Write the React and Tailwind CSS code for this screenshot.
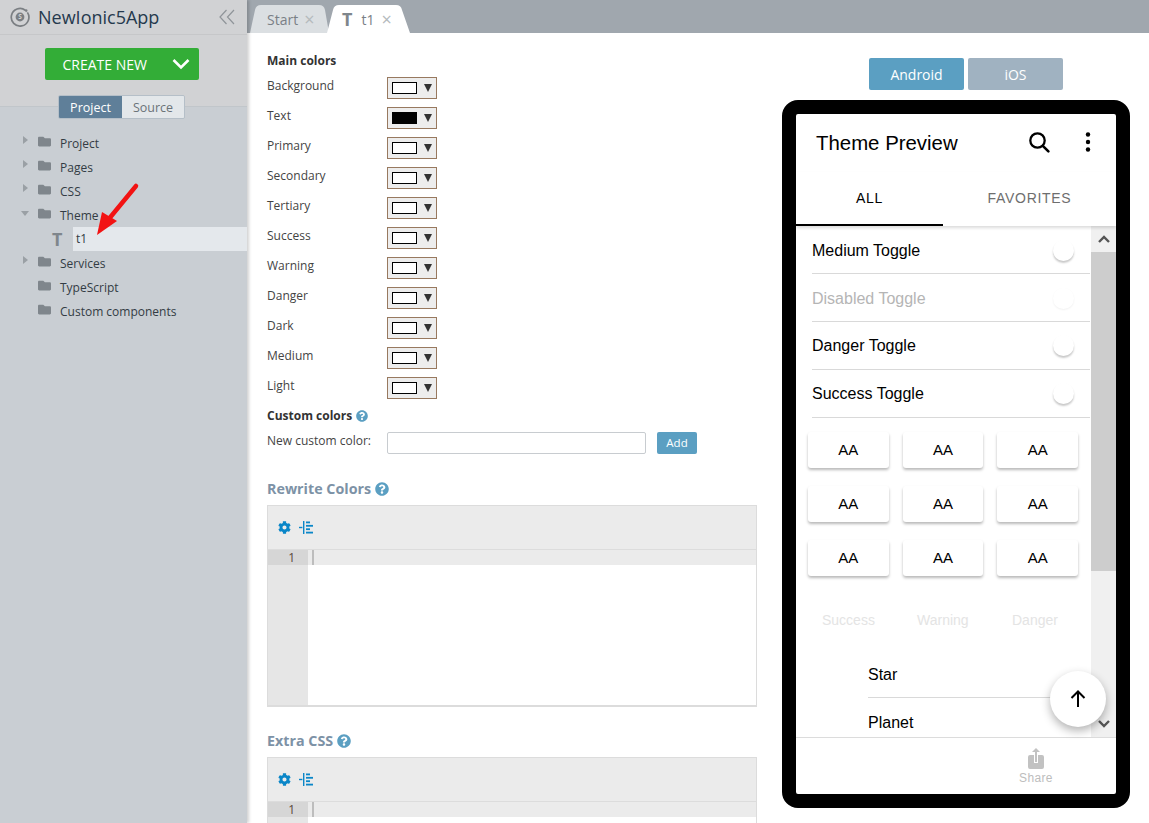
import React from "react";
import { FaFolder, FaCog, FaQuestionCircle } from "react-icons/fa";

const open = "font-['Open_Sans',sans-serif]";
const arial = "font-['Liberation_Sans',Arial,sans-serif]";

const tree = [
  { n: "Project", c: 1 },
  { n: "Pages", c: 1 },
  { n: "CSS", c: 1 },
  { n: "Theme", o: 1 },
  { n: "t1", leaf: 1 },
  { n: "Services", c: 1 },
  { n: "TypeScript" },
  { n: "Custom components" },
];
const colors = ["Background", "Text", "Primary", "Secondary", "Tertiary", "Success", "Warning", "Danger", "Dark", "Medium", "Light"];
const toggles = ["Medium Toggle", "Disabled Toggle", "Danger Toggle", "Success Toggle"];

function Indent() {
  return (
    <svg width="14" height="13" viewBox="0 0 14 13" fill="#0a86c8">
      <rect x="4" y="0" width="1.4" height="13" />
      <rect x="0" y="5.8" width="3.4" height="1.4" />
      <rect x="7" y="0.5" width="4" height="1.8" />
      <rect x="7" y="3.9" width="7" height="1.8" />
      <rect x="7" y="7.3" width="4" height="1.8" />
      <rect x="7" y="10.7" width="7" height="1.8" />
    </svg>
  );
}

function Editor({ h }) {
  return (
    <div className={`border border-[#dcdcdc] border-b-2 ${h} flex flex-col w-[490px]`}>
      <div className="h-[44px] shrink-0 bg-[#ebebeb] border-b border-[#dcdcdc] flex items-center gap-[8px] pl-[10px]">
        <FaCog className="text-[#0a86c8] text-[13px]" />
        <Indent />
      </div>
      <div className="flex flex-1">
        <div className="w-[40px] bg-[#e6e6e6]">
          <div className={`h-[15px] bg-[#d6d6d6] text-[12px] leading-[15px] text-right pr-[13px] text-[#5a4a3a] ${open}`}>1</div>
        </div>
        <div className="flex-1">
          <div className="h-[15px] bg-[#ebebeb] pl-[4px]">
            <div className="w-[2px] h-[15px] bg-[#bdbdbd]" />
          </div>
        </div>
      </div>
    </div>
  );
}

export default function App() {
  return (
    <div className={`w-[1149px] h-[823px] overflow-hidden flex bg-white ${open}`}>
      {/* sidebar */}
      <aside className="w-[247px] shrink-0 h-full bg-[#c9ced3] shadow-[2px_0_3px_rgba(0,0,0,0.18)] z-10 flex flex-col">
        <div className="h-[107px] shrink-0 bg-[#d1d2d4] border-b border-[#c1c6ca] relative">
          <div className="h-[35px] border-b border-[#c6c7c9] flex items-center pl-[10px]">
            <svg width="20" height="20" viewBox="0 0 20 20" className="shrink-0">
              <path d="M15.3 3.2A8.8 8.8 0 1 0 17.4 5.4" fill="none" stroke="#7b7f83" strokeWidth="1.7" />
              <circle cx="16.2" cy="3.6" r="1.3" fill="#7b7f83" />
              <circle cx="10" cy="10" r="4.4" fill="#7b7f83" />
              <text x="10" y="12.4" textAnchor="middle" fontSize="6.5" fontWeight="700" fill="#d1d2d4">S</text>
            </svg>
            <span className="ml-[8px] text-[18px] leading-none text-[#25394d]">NewIonic5App</span>
            <svg width="16" height="16" viewBox="0 0 16 16" className="ml-auto mr-[12px]" fill="none" stroke="#8f9499" strokeWidth="1.2">
              <path d="M7.5 1 1 8l6.5 7M15 1 8.5 8l6.5 7" />
            </svg>
          </div>
          <div className="flex justify-center pr-[4px] mt-[13px]">
            <div className="w-[154px] h-[32px] bg-[#33ad37] rounded-[2px] flex items-center text-white text-[14px] pl-[18px]">
              CREATE NEW
              <svg width="18" height="12" viewBox="0 0 18 12" className="ml-auto mr-[9px]" fill="none" stroke="#fff" strokeWidth="2.6">
                <path d="M1.5 2 9 9.5 16.5 2" />
              </svg>
            </div>
          </div>
          <div className="absolute left-[58px] top-[95px] w-[127px] h-[24px] flex text-[12.5px] rounded-[2px] overflow-hidden border border-[#b5bfc8]">
            <div className="w-[63px] bg-[#5f7f99] text-white flex items-center justify-center pt-[2px]">Project</div>
            <div className="flex-1 bg-[#e3e7ea] text-[#6b7379] flex items-center justify-center pt-[2px]">Source</div>
          </div>
        </div>
        <div className="pt-[24px]">
          {tree.map((t) =>
            t.leaf ? (
              <div key={t.n} className="h-[24px] flex items-center relative">
                <span className="absolute left-[52px] text-[18px] font-bold text-[#7f868c] leading-none">T</span>
                <div className="ml-[73px] flex-1 h-full bg-[#e4e8ec] pl-[3px] flex items-center text-[12px] text-[#333c44]">t1</div>
              </div>
            ) : (
              <div key={t.n} className="h-[24px] flex items-center relative text-[12px] text-[#333c44]">
                {t.c && <span className="absolute left-[23px] top-[5px] w-0 h-0 border-y-[4px] border-y-transparent border-l-[5px] border-l-[#9aa0a5]" />}
                {t.o && <span className="absolute left-[21px] top-[8px] w-0 h-0 border-x-[4px] border-x-transparent border-t-[5px] border-t-[#9aa0a5]" />}
                <FaFolder className="absolute left-[38px] top-[4px] text-[#7f868c] text-[13px]" />
                <span className="ml-[60px] mt-[1px]">{t.n}</span>
              </div>
            )
          )}
        </div>
      </aside>

      {/* main */}
      <div className="flex-1 flex flex-col min-w-0">
        <div className="h-[33px] shrink-0 bg-[#a0a7ae] flex items-end pl-[3px]">
          <div className="relative w-[79px] h-[28px] flex items-center pl-[17px] text-[14px] text-[#7a8086]">
            <svg width="79" height="28" className="absolute inset-0" viewBox="0 0 79 28">
              <path d="M0 28 5 5Q6 0 11 0H69Q74 0 75 5L79 28Z" fill="#dbdfe2" />
            </svg>
            <span className="relative">Start</span>
            <span className="relative ml-[6px] text-[18px] leading-none text-[#b5babd]">×</span>
          </div>
          <div className="relative w-[83px] h-[28px] -ml-[2px] flex items-center pl-[15px] text-[14px] text-[#7a8086]">
            <svg width="83" height="28" className="absolute inset-0" viewBox="0 0 83 28">
              <path d="M0 28 6 5Q7 0 12 0H69Q74 0 75 5L83 28Z" fill="#fff" />
            </svg>
            <span className="relative text-[18px] font-bold leading-none mr-[9px] text-[#7f868c]">T</span>
            <span className="relative">t1</span>
            <span className="relative ml-[7px] text-[18px] leading-none text-[#b5babd]">×</span>
          </div>
        </div>

        <div className="flex-1 flex min-h-0">
          {/* settings column */}
          <div className="w-[535px] shrink-0 pl-[20px] pt-[19px]">
            <div className="text-[12px] font-bold leading-[17px] text-[#333]">Main colors</div>
            <div className="mt-[3px]">
              {colors.map((c) => (
                <div key={c} className="h-[30px] flex">
                  <span className="w-[120px] text-[12px] leading-[18px] pt-[5px] text-[#444]">{c}</span>
                  <div className="w-[50px] h-[22px] mt-[5px] border border-[#98795f] bg-[#ededed] flex items-center pl-[4px]">
                    <span className={`w-[25px] h-[12px] border border-black ${c === "Text" ? "bg-black" : "bg-white"}`} />
                    <span className="ml-[7px] w-0 h-0 border-x-[4px] border-x-transparent border-t-[8px] border-t-[#333]" />
                  </div>
                </div>
              ))}
            </div>
            <div className="flex items-center gap-[4px] text-[12px] font-bold text-[#333] leading-[17px] mt-[5px]">
              Custom colors <FaQuestionCircle className="text-[#5b9fc2] text-[12px]" />
            </div>
            <div className="flex mt-[8px] h-[22px]">
              <span className="w-[120px] text-[12px] leading-[18px] text-[#444]">New custom color:</span>
              <div className="w-[259px] h-[22px] border border-[#c8ccd0] rounded-[2px] bg-white" />
              <div className="ml-[11px] w-[40px] h-[22px] rounded-[2px] bg-[#5b9fc2] text-white text-[11.5px] flex items-center justify-center">Add</div>
            </div>
            <div className="flex items-center gap-[4px] mt-[25px] text-[14.3px] font-bold text-[#7d92a6] leading-[20px]">
              Rewrite Colors <FaQuestionCircle className="text-[#5b9fc2] text-[14px]" />
            </div>
            <div className="mt-[6px]"><Editor h="h-[202px]" /></div>
            <div className="flex items-center gap-[4px] mt-[24px] text-[14.3px] font-bold text-[#7d92a6] leading-[20px]">
              Extra CSS <FaQuestionCircle className="text-[#5b9fc2] text-[14px]" />
            </div>
            <div className="mt-[6px]"><Editor h="h-[202px]" /></div>
          </div>

          {/* preview column */}
          <div className="flex-1 pt-[25px]">
            <div className="flex gap-[4px] pl-[87px]">
              <div className="w-[95px] h-[32px] rounded-[2px] bg-[#5b9fc2] text-white text-[14px] flex items-center justify-center">Android</div>
              <div className="w-[95px] h-[32px] rounded-[2px] bg-[#a0b2c1] text-white text-[14px] flex items-center justify-center">iOS</div>
            </div>
            <div className={`mt-[10px] ml-[0px] w-[348px] h-[708px] border-[14px] border-black rounded-[16px] bg-white flex flex-col relative overflow-hidden ${arial}`}>
              <div className="h-[58px] shrink-0 flex items-center pl-[20px] text-[20.4px] text-black">
                Theme Preview
                <svg width="24" height="24" viewBox="0 0 24 24" className="ml-auto mr-[34px] -mt-[3px]" fill="none" stroke="#000" strokeWidth="2.3">
                  <circle cx="10.5" cy="10.5" r="7.2" />
                  <path d="m15.8 15.8 5.6 5.6" strokeLinecap="round" strokeWidth="2.6" />
                </svg>
                <svg width="6" height="22" viewBox="0 0 6 22" className="mr-[25px] -mt-[3px]" fill="#000">
                  <circle cx="3" cy="3.5" r="2.2" /><circle cx="3" cy="11" r="2.2" /><circle cx="3" cy="18.5" r="2.2" />
                </svg>
              </div>
              <div className="h-[54px] shrink-0 flex text-[14px] tracking-[0.05em] shadow-[0_2px_3px_rgba(0,0,0,0.14)] z-10 bg-white">
                <div className="w-[147px] border-b-2 border-black flex items-center justify-center text-black">ALL</div>
                <div className="flex-1 flex items-center justify-center text-[#6e6e6e] pb-[1px]">FAVORITES</div>
              </div>
              <div className="flex-1 flex min-h-0 border-b border-[#dcdcdc]">
                <div className="flex-1 min-w-0 overflow-hidden">
                  <div className="pl-[16px] pr-[1px]">
                    {toggles.map((t, i) => (
                      <div key={t} className={`h-[48px] border-b border-[#d9d9d9] flex items-center justify-between pr-[16px] text-[16px] ${i === 1 ? "text-[#b5b5b5]" : "text-black"} ${i < 2 ? "pt-[2px]" : ""}`}>
                        {t}
                        <span className={`w-[21px] h-[21px] rounded-full bg-white ${i === 1 ? "shadow-[0_1px_2px_rgba(0,0,0,0.06)]" : "shadow-[0_2px_2px_rgba(0,0,0,0.22)]"}`} />
                      </div>
                    ))}
                  </div>
                  <div className="grid grid-cols-3 gap-x-[14px] gap-y-[18px] pl-[12px] pr-[13px] mt-[14px]">
                    {Array.from({ length: 9 }).map((_, i) => (
                      <div key={i} className="h-[36px] rounded-[3px] bg-white shadow-[0_2px_3px_rgba(0,0,0,0.28)] flex items-center justify-center text-[15px] text-black">AA</div>
                    ))}
                  </div>
                  <div className="flex mt-[34px] pl-[26px] text-[14px] text-[#e4e4e4]">
                    <span className="w-[95px]">Success</span>
                    <span className="w-[95px]">Warning</span>
                    <span>Danger</span>
                  </div>
                  <div className="pl-[72px] mt-[20px] text-[16px] text-black">
                    <div className="h-[47px] border-b border-[#d9d9d9] flex items-center pt-[2px]">Star</div>
                    <div className="h-[48px] flex items-center pt-[2px]">Planet</div>
                  </div>
                </div>
                <div className="w-[25px] shrink-0 bg-[#f0f0f0] flex flex-col relative">
                  <div className="h-[26px] flex items-center justify-center">
                    <svg width="12" height="8" viewBox="0 0 12 8" fill="none" stroke="#555" strokeWidth="2.4"><path d="M1 7l5-5 5 5" /></svg>
                  </div>
                  <div className="h-[319px] bg-[#cdcdcd]" />
                  <div className="mt-auto h-[26px] flex items-center justify-center">
                    <svg width="12" height="8" viewBox="0 0 12 8" fill="none" stroke="#555" strokeWidth="2.4"><path d="M1 1l5 5 5-5" /></svg>
                  </div>
                </div>
              </div>
              <div className="h-[56px] shrink-0 flex flex-col items-center pl-[160px] pt-[10px] text-[12px] tracking-[0.03em] text-[#bdbdbd] leading-[14px]">
                <svg width="18" height="22" viewBox="0 0 18 22" fill="#c2c2c2">
                  <path d="M9 0 5 4h3v10h2V4h3z" />
                  <path d="M3 7h4v8h4V7h4a2 2 0 0 1 2 2v10a2 2 0 0 1-2 2H3a2 2 0 0 1-2-2V9a2 2 0 0 1 2-2z" />
                </svg>
                <span className="mt-[1px]">Share</span>
              </div>
              <div className="absolute left-[254px] top-[557px] w-[56px] h-[56px] rounded-full bg-white shadow-[0_4px_10px_rgba(0,0,0,0.3)] flex items-center justify-center z-20">
                <svg width="24" height="24" viewBox="0 0 24 24" fill="none" stroke="#000" strokeWidth="2"><path d="M12 20V4.5M5.5 11 12 4.5 18.5 11" /></svg>
              </div>
            </div>
          </div>
        </div>
      </div>

      {/* annotation arrow */}
      <svg width="60" height="70" viewBox="0 0 60 70" className="absolute left-[90px] top-[180px] z-20">
        <path d="M46 6 18 40" stroke="#f21313" strokeWidth="4.5" strokeLinecap="round" fill="none" />
        <path d="M7 55 12 32 27 41z" fill="#f21313" />
      </svg>
    </div>
  );
}
